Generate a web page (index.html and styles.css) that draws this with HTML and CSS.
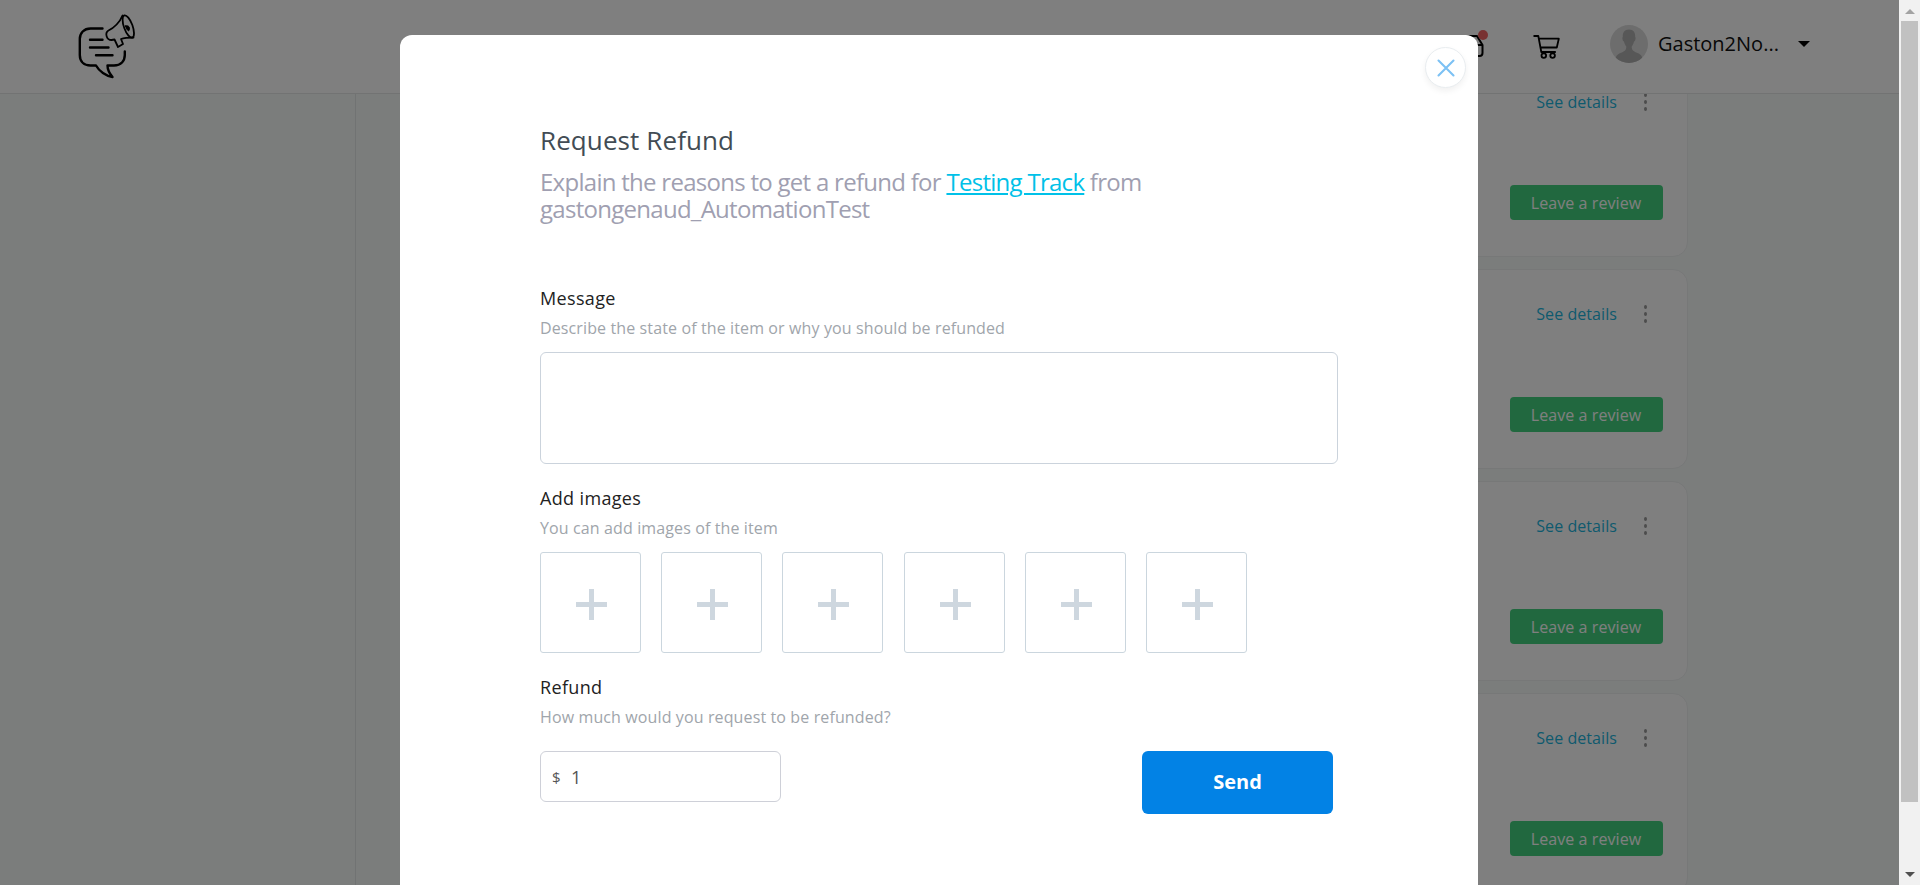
FILE: index.html
```html
<!DOCTYPE html>
<html lang="en">
<head>
<meta charset="utf-8">
<title>Request Refund</title>
<link rel="stylesheet" href="styles.css">
</head>
<body>
<div class="window">
  <div class="page">
    <header class="header">
      <svg class="logo" width="60" height="70" viewBox="0 0 60 70" fill="none" stroke="#000" stroke-linecap="round" stroke-linejoin="round">
        <path d="M24.5 18.5H12.5C6 18.5 1.8 23 1.8 29V45C1.8 51.500 6 55.500 12.500 55.500H18C21 61 28 66 34.500 67C31.500 63.500 29.500 60 29.500 55.500H36C43 55.500 46.800 51 46.800 45V41.500" stroke-width="2.400"/>
        <path d="M12 29.800H24.500M12 37.500H30.500M18 45.200H34.500" stroke-width="2.400"/>
        <path d="M44.500 5.500C42 12 36 18 30.500 20.500C26.500 23 28.500 30 33.500 30L36.500 29.500L40 37L45 34L43 29C47 27.500 52 27.500 55.500 27.500" stroke-width="1.800"/>
        <ellipse cx="50.300" cy="16.500" rx="4.300" ry="11.800" transform="rotate(-20 50.300 16.500)" stroke-width="1.800"/>
        <path d="M47.500 16C50.500 14.500 53 18 50.500 21C49 20 48 18 47.500 16Z" fill="#000" stroke-width="1"/>
      </svg>
      <div class="tools">
        <span class="inbox">
          <svg width="28" height="24" viewBox="0 0 28 24" fill="none" stroke="#000" stroke-width="2" stroke-linejoin="round"><path d="M2 11L7 2H21L26.500 11V19Q26.500 22 23.500 22H5Q2 22 2 19ZM2 11H8L10 15H18L20 11H26"/></svg>
          <i class="dot"></i>
        </span>
        <svg class="cart" width="28" height="26" viewBox="0 0 28 26" fill="none" stroke="#000" stroke-width="1.800" stroke-linejoin="round"><path d="M.5 2H5.300L8.300 18H22.800M5.800 4.700H25.800L23.800 13.500H7.500"/><circle cx="10.800" cy="21.600" r="2.300"/><circle cx="19.600" cy="21.600" r="2.300"/></svg>
        <svg class="avatar" width="38" height="38" viewBox="0 0 38 38"><defs><clipPath id="face"><circle cx="19" cy="19" r="19"/></clipPath></defs><g clip-path="url(#face)"><path fill="#dadada" d="M0 0H38V38H0Z"/><path fill="#aeaeae" d="M19 4.500C14.500 4.500 12.500 7.500 12.800 12C12 12.500 12.500 16 14 16.500C14.500 19 15.500 20.500 16.300 21.500C16.500 25.500 14 26.500 10.500 28C7 29.300 5.500 31 5 38H33C32.500 31 31 29.300 27.500 28C24 26.500 21.500 25.500 21.700 21.500C22.500 20.500 23.500 19 24 16.500C25.500 16 26 12.500 25.200 12C25.500 7.500 23.500 4.500 19 4.500Z"/></g></svg>
        <span class="user">Gaston2No...</span>
        <i class="caret"></i>
      </div>
    </header>
    <main class="content">
      <aside class="side"></aside>
      <section class="orders">
        <article class="card"><div class="links"><a>See details</a><span class="more"><i></i><i></i><i></i></span></div><span class="review">Leave a review</span></article>
        <article class="card"><div class="links"><a>See details</a><span class="more"><i></i><i></i><i></i></span></div><span class="review">Leave a review</span></article>
        <article class="card"><div class="links"><a>See details</a><span class="more"><i></i><i></i><i></i></span></div><span class="review">Leave a review</span></article>
        <article class="card"><div class="links"><a>See details</a><span class="more"><i></i><i></i><i></i></span></div><span class="review">Leave a review</span></article>
      </section>
    </main>
    <div class="overlay">
      <div class="modal">
        <span class="close"><svg width="18" height="18" viewBox="0 0 18 18" stroke="#7cc1f4" stroke-width="2.100" stroke-linecap="round"><path d="M1.500 1.500L16.500 16.500M16.500 1.500L1.500 16.500"/></svg></span>
        <h1 class="title">Request Refund</h1>
        <p class="lead">Explain the reasons to get a refund for <a class="item">Testing Track</a> from<br>gastongenaud_AutomationTest</p>
        <h2 class="label first">Message</h2>
        <p class="hint">Describe the state of the item or why you should be refunded</p>
        <div class="textarea"></div>
        <h2 class="label">Add images</h2>
        <p class="hint">You can add images of the item</p>
        <div class="images"><span class="slot"></span><span class="slot"></span><span class="slot"></span><span class="slot"></span><span class="slot"></span><span class="slot"></span></div>
        <h2 class="label">Refund</h2>
        <p class="hint">How much would you request to be refunded?</p>
        <div class="actions">
          <div class="amount"><span class="currency">$</span><span>1</span></div>
          <span class="send">Send</span>
        </div>
      </div>
    </div>
  </div>
  <div class="scrollbar"><i class="up"></i><i class="thumb"></i><i class="down"></i></div>
</div>
</body>
</html>
```
FILE: styles.css
```css
* { box-sizing: border-box; }
body { margin: 0; font-family: "Open Sans", "Noto Sans", sans-serif; overflow: hidden; }
h1, h2, p { margin: 0; font-weight: 400; }
svg { display: block; flex: none; }
.window { display: flex; height: 885px; }
.page { position: relative; flex: 1; display: flex; flex-direction: column; overflow: hidden; background: #f7faf9; }

.header { flex: none; display: flex; justify-content: space-between; height: 94px; padding: 0 89px 0 78px; background: #fff; border-bottom: 1px solid #e4e7e7; position: relative; }
.logo { margin-top: 10px; }
.tools { display: flex; align-items: flex-start; }
.inbox { position: relative; margin: 34px 49px 0 0; }
.dot { position: absolute; left: 22px; top: -4px; width: 10px; height: 10px; border-radius: 50%; background: #f16565; }
.cart { margin: 34px 49px 0 0; }
.avatar { margin-top: 25px; }
.user { margin: 31px 19px 0 10px; width: 121px; font-size: 20px; line-height: 26px; white-space: nowrap; color: #111; }
.caret { margin-top: 41px; border: 6px solid transparent; border-top-color: #000; border-bottom: 0; }

.content { flex: 1; min-height: 0; display: flex; }
.side { width: 356px; border-right: 1px solid #e2e6e6; }
.orders { width: 1272px; margin: -37px 0 0 60px; display: flex; flex-direction: column; gap: 12px; }
.card { flex: none; height: 200px; padding: 32px 24px 0; border: 1px solid #eef1f1; border-radius: 15px; background: #fff; display: flex; flex-direction: column; align-items: flex-end; gap: 71px; }
.links { display: flex; align-items: center; height: 24px; padding-right: 16px; gap: 27px; font-size: 16px; letter-spacing: .07px; color: #1cb4dc; }
.more { display: flex; flex-direction: column; gap: 3px; }
.more i { width: 3px; height: 4px; border-radius: 50%; background: #999; }
.review { width: 153px; height: 35px; padding-right: 1px; border-radius: 4px; background: #43d17f; color: #fff; font-size: 16px; line-height: 36px; letter-spacing: .07px; text-align: center; }

.overlay { position: absolute; inset: 0; background: rgba(0, 0, 0, .5); display: flex; align-items: flex-start; }
.modal { position: relative; width: 1078px; height: 850px; margin: 35px 0 0 400px; padding: 87px 140px 0; border-radius: 12px 12px 0 0; background: #fff; }
.close { position: absolute; right: 12px; top: 12px; width: 41px; height: 41px; border: 1px solid #e9edf0; border-radius: 50%; box-shadow: 0 3px 6px rgba(0, 0, 0, .06); background: #fff; display: flex; align-items: center; justify-content: center; }
.title { font-size: 26px; line-height: 36px; letter-spacing: .1px; color: #424c54; }
.lead { margin-top: 10px; font-size: 24px; line-height: 27px; letter-spacing: -.72px; color: #a09fb1; white-space: nowrap; }
.item { color: #00c1e8; text-decoration: underline; }
.label { margin-top: 19px; font-size: 18px; line-height: 30px; letter-spacing: .35px; color: #222; }
.label.first { margin-top: 61px; }
.hint { font-size: 16px; line-height: 30px; letter-spacing: .12px; color: #a0a5ab; }
.textarea { width: 798px; height: 112px; margin-top: 9px; border: 1px solid #cbd3dc; border-radius: 6px; }
.images { display: grid; grid-template-columns: repeat(6, 101px); gap: 20.200px; margin-top: 9px; }
.slot { height: 101px; border: 1px solid #cbd6de; border-radius: 3px; background: linear-gradient(#ced7df, #ced7df) 35px 49px / 31px 5px no-repeat, linear-gradient(#ced7df, #ced7df) 48px 36px / 5px 31px no-repeat; }
.actions { display: flex; justify-content: space-between; margin-top: 19px; padding-right: 5px; align-items: flex-start; }
.amount { width: 241px; height: 51px; padding-left: 11px; border: 1px solid #ced0d8; border-radius: 6px; display: flex; align-items: center; gap: 10px; font-size: 18px; color: #555; }
.currency { font-size: 15px; width: 9px; }
.send { width: 191px; height: 63px; border-radius: 6px; background: #0282e5; color: #fff; font-size: 20px; font-weight: 700; line-height: 62px; text-align: center; }

.scrollbar { width: 21px; padding: 9px 2px 8px; background: #f1f1f1; display: flex; flex-direction: column; align-items: center; }
.up { border: 5px solid transparent; border-bottom-color: #a3a3a3; border-top: 0; }
.thumb { width: 17px; height: 781px; margin-top: 7px; background: #c1c1c1; }
.down { margin-top: auto; border: 5px solid transparent; border-top-color: #505050; border-bottom: 0; }
```
